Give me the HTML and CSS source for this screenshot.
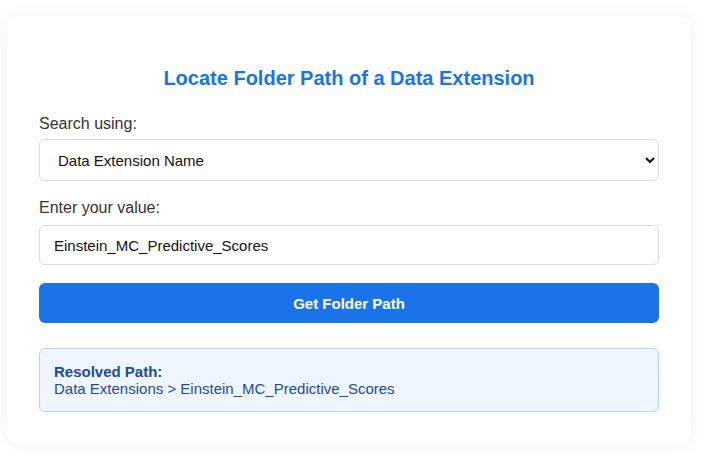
FILE: index.html
```html
<!DOCTYPE html>
<html>
<head>
<meta charset="utf-8">
<link rel="stylesheet" href="styles.css">
</head>
<body>
<div class="page">
  <div class="card">
    <h2 class="title">Locate Folder Path of a Data Extension</h2>
    <label class="label" for="mode">Search using:</label>
    <select class="select" id="mode">
      <option>Data Extension Name</option>
    </select>
    <label class="label label2" for="val">Enter your value:</label>
    <input class="input" id="val" type="text" value="Einstein_MC_Predictive_Scores">
    <button class="btn">Get Folder Path</button>
    <div class="result">
      <div class="result-title">Resolved Path:</div>
      <div class="result-path">Data Extensions &gt; Einstein_MC_Predictive_Scores</div>
    </div>
  </div>
</div>
</body>
</html>
```
FILE: styles.css
```css
html, body {
  margin: 0;
  background: #ffffff;
  font-family: "Liberation Sans", Arial, sans-serif;
}
.page {
  padding: 16px 35px 16px 7px;
}
.card {
  background: #ffffff;
  border-radius: 12px;
  box-shadow: 0 0 20px rgba(0, 0, 0, 0.06);
  padding: 51px 32px 32px;
  display: flex;
  flex-direction: column;
}
.title {
  margin: 0 0 25px;
  font-size: 20px;
  line-height: 23px;
  color: #1a73e8;
  text-align: center;
  font-weight: bold;
}
.label {
  font-size: 16px;
  line-height: 18px;
  color: #333333;
  margin-bottom: 6px;
}
.label2 {
  margin-top: 18px;
  margin-bottom: 8px;
}
.select {
  height: 42px;
  border: 1px solid #dddddd;
  border-radius: 6px;
  background: #ffffff;
  padding: 0 14px;
  font-family: "Liberation Sans", Arial, sans-serif;
  font-size: 15px;
  color: #111111;
}
.input {
  height: 40px;
  box-sizing: border-box;
  border: 1px solid #dddddd;
  border-radius: 6px;
  padding: 0 14px;
  font-family: "Liberation Sans", Arial, sans-serif;
  font-size: 15px;
  color: #111111;
  outline: none;
}
.btn {
  margin-top: 18px;
  height: 40px;
  border: none;
  border-radius: 6px;
  background: #1a73e8;
  color: #ffffff;
  font-family: "Liberation Sans", Arial, sans-serif;
  font-size: 15px;
  font-weight: bold;
}
.result {
  margin-top: 25px;
  background: #f0f6ff;
  border: 1px solid #b3d4fc;
  border-radius: 6px;
  padding: 14px 14px 14px;
  color: #1c4a9c;
  font-size: 15px;
  line-height: 17px;
}
.result-title {
  font-weight: bold;
}
```
